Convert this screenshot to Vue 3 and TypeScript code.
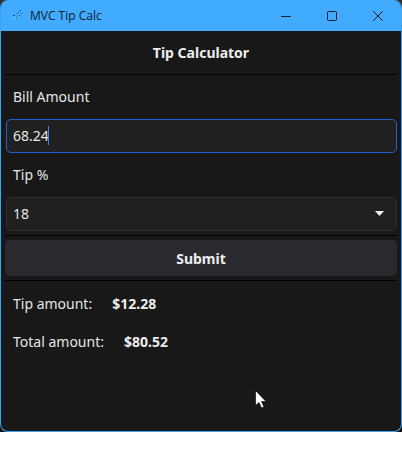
<script setup lang="ts">
const bill = '68.24'
const tip = '18'
const results = [
  { label: 'Tip amount:', value: '$12.28' },
  { label: 'Total amount:', value: '$80.52' },
]
</script>

<template>
  <div class="page">
    <div class="frame">
      <div class="window">
        <div class="titlebar">
          <svg class="app-icon" width="16" height="16" viewBox="0 0 16 16">
            <rect x="12" y="2" width="1" height="1" fill="#14507f" />
            <rect x="10" y="4" width="1" height="1" fill="#0f3f66" />
            <rect x="13" y="5" width="1" height="1" fill="#14507f" />
            <rect x="8" y="5" width="1" height="1" fill="#1a6aa8" />
            <rect x="11" y="7" width="1" height="1" fill="#14507f" />
            <rect x="5" y="7" width="2" height="1" fill="#14507f" />
            <rect x="5" y="9" width="2" height="2" fill="#2ee6d0" />
            <rect x="8" y="9" width="1" height="1" fill="#14507f" />
          </svg>
          <span class="title">MVC Tip Calc</span>
          <div class="controls">
            <svg width="12" height="12" viewBox="0 0 12 12"><path d="M1 6.5h10" stroke="#10202c" fill="none" /></svg>
            <svg width="12" height="12" viewBox="0 0 12 12"><rect x="1.5" y="1.5" width="9" height="9" rx="1" stroke="#10202c" fill="none" /></svg>
            <svg width="12" height="12" viewBox="0 0 12 12"><path d="M1 1l10 10M11 1L1 11" stroke="#10202c" fill="none" /></svg>
          </div>
        </div>
        <div class="body">
          <header class="head">Tip Calculator</header>
          <label class="label">Bill Amount</label>
          <div class="field focus"><span>{{ bill }}</span><i class="caret"></i></div>
          <label class="label">Tip %</label>
          <div class="field select">
            <span>{{ tip }}</span>
            <svg width="9" height="5" viewBox="0 0 9 5"><path d="M0 0h9L4.5 5z" fill="#f0f0f0" /></svg>
          </div>
          <div class="divider"></div>
          <button class="submit">Submit</button>
          <div class="results">
            <div v-for="r in results" :key="r.label" class="row">
              <span>{{ r.label }}</span><strong>{{ r.value }}</strong>
            </div>
          </div>
        </div>
        <svg class="cursor" width="12" height="19" viewBox="0 0 12 19">
          <path d="M0.5 0.5V15.5L4 12.5L6.5 18L9 17L6.5 11.5H11z" fill="#fff" stroke="#111" stroke-width="0.7" />
        </svg>
      </div>
    </div>
  </div>
</template>

<style scoped>
.page {
  width: 402px;
  height: 462px;
  background: #fff;
  overflow: hidden;
}
.frame {
  height: 432px;
  background: linear-gradient(#2e2e2e, #101010);
}
.window {
  position: relative;
  box-sizing: border-box;
  width: 402px;
  height: 432px;
  display: flex;
  flex-direction: column;
  background: #181818;
  border: 1px solid #3ea6f0;
  border-top: 0;
  border-radius: 8px;
  overflow: hidden;
  font-family: "Noto Sans", sans-serif;
  font-size: 14px;
  color: #e6e6e6;
}
.titlebar {
  height: 31px;
  flex: none;
  margin: 0 -1px;
  background: #40abff;
  display: flex;
  align-items: center;
  padding-left: 8px;
  color: #10202c;
  font-family: "Open Sans", sans-serif;
  font-size: 12px;
}
.app-icon {
  flex: none;
  margin-right: 6px;
}
.controls {
  margin-left: auto;
  display: flex;
  gap: 34px;
  padding-right: 18px;
  align-items: center;
}
.body {
  flex: 1;
  display: flex;
  flex-direction: column;
  padding: 0 4px;
}
.head {
  height: 43px;
  line-height: 44px;
  text-align: center;
  font-weight: 700;
  color: #ededed;
  border-bottom: 1px solid #000;
}
.label {
  display: block;
  height: 22px;
  line-height: 22px;
  padding-left: 8px;
  margin: 11px 0;
}
.field {
  box-sizing: border-box;
  height: 34px;
  flex: none;
  margin: 0 0 0 1px;
  padding: 0 6px 1px;
  display: flex;
  align-items: center;
  background: #202020;
  border: 1px solid #2e2e2e;
  border-radius: 5px;
}
.field.focus {
  border-color: #2160cf;
}
.caret {
  width: 1px;
  height: 19px;
  margin-left: -1px;
  background: #3b82f6;
}
.select {
  justify-content: space-between;
  padding-right: 12px;
}
.divider {
  height: 1px;
  flex: none;
  margin-top: 4px;
  background: #000;
}
.submit {
  display: block;
  box-sizing: border-box;
  flex: none;
  width: 100%;
  height: 36px;
  margin-top: 4px;
  border: 0;
  border-radius: 5px;
  background: #292a30;
  color: #ededed;
  font: 700 14px "Noto Sans", sans-serif;
}
.results {
  margin-top: 4px;
  border-top: 1px solid #000;
  padding-top: 12px;
}
.row {
  height: 22px;
  line-height: 22px;
  margin-bottom: 16px;
  padding-left: 8px;
  display: flex;
  gap: 20px;
}
.row strong {
  font-weight: 700;
  color: #ededed;
}
.cursor {
  position: absolute;
  left: 254px;
  top: 390px;
}
</style>
